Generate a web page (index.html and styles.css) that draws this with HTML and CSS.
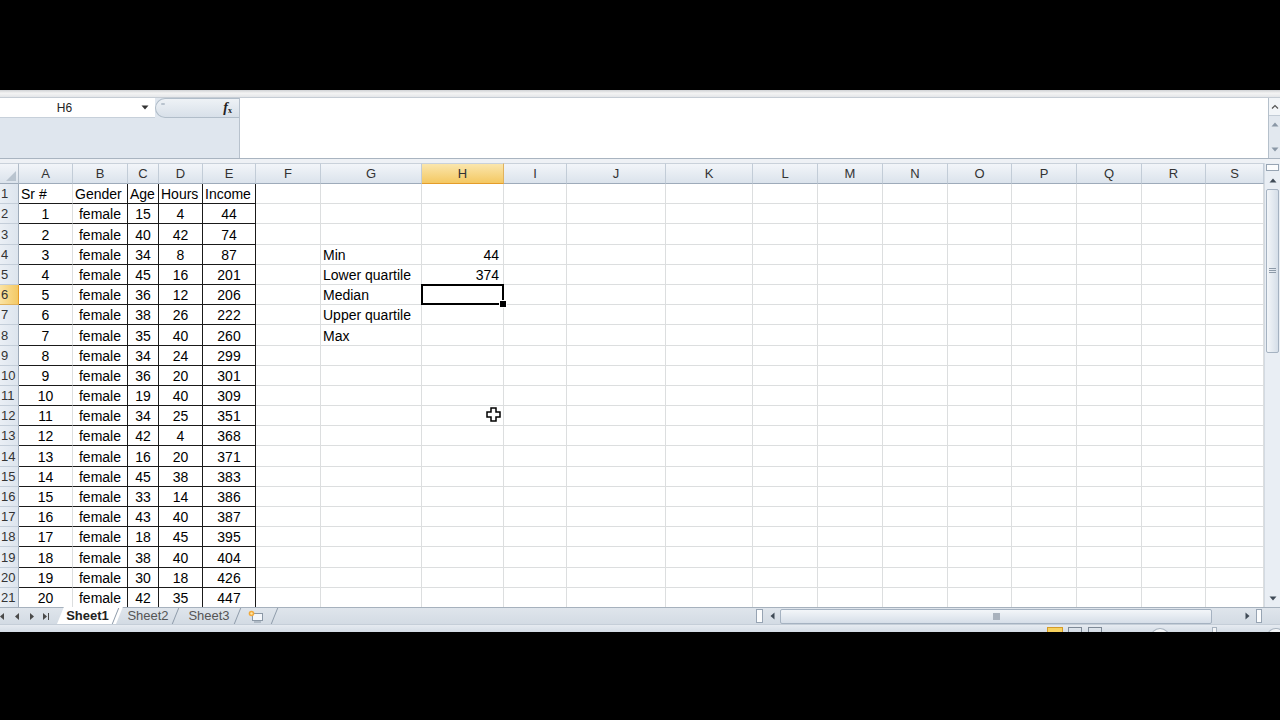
FILE: index.html
```html
<!DOCTYPE html>
<html>
<head>
<meta charset="utf-8">
<title>Excel - Sheet1</title>
<link rel="stylesheet" href="styles.css">
</head>
<body>
<div class="screen">
  <div class="topblack"></div>
  <div class="edge"></div>
  <div class="fbar">
    <div class="fleft">
      <div class="frow">
        <div class="namebox">
          <span class="nm">H6</span>
          <svg class="dd" width="8" height="5" viewBox="0 0 8 5"><path d="M0.5 0.5H7.5L4 4.5Z" fill="#333"/></svg>
        </div>
        <div class="fxzone">
          <span class="grip"></span>
          <span class="fx"><i>f</i><sub>x</sub></span>
        </div>
      </div>
    </div>
    <div class="finput"></div>
    <div class="fscroll">
      <div class="fcollapse"><svg width="8" height="5" viewBox="0 0 8 5"><path d="M1 4.5L4 1.5L7 4.5" fill="none" stroke="#555" stroke-width="1.2"/></svg></div>
      <div class="fbtns">
        <svg width="8" height="5" viewBox="0 0 8 5"><path d="M0.5 4.5H7.5L4 0.5Z" fill="#8a97a6"/></svg>
        <svg width="8" height="5" viewBox="0 0 8 5"><path d="M0.5 0.5H7.5L4 4.5Z" fill="#8a97a6"/></svg>
      </div>
    </div>
  </div>
  <div class="gap"></div>
  <div class="sheetwrap">
    <div class="gridclip">
      <table class="grid">
        <colgroup>
          <col style="width:19px"><col style="width:54px"><col style="width:55px"><col style="width:31px"><col style="width:44px"><col style="width:53px"><col style="width:65px"><col style="width:101px"><col style="width:82px"><col style="width:63px"><col style="width:99px"><col style="width:87px"><col style="width:65px"><col style="width:65px"><col style="width:65px"><col style="width:64px"><col style="width:65px"><col style="width:65px"><col style="width:64px"><col style="width:58px">
        </colgroup>
        <thead>
          <tr>
            <th class="corner"><span class="tri"></span></th>
            <th class="ch">A</th><th class="ch">B</th><th class="ch">C</th><th class="ch">D</th><th class="ch">E</th><th class="ch">F</th><th class="ch">G</th><th class="ch csel">H</th><th class="ch">I</th><th class="ch">J</th><th class="ch">K</th><th class="ch">L</th><th class="ch">M</th><th class="ch">N</th><th class="ch">O</th><th class="ch">P</th><th class="ch">Q</th><th class="ch">R</th><th class="ch">S</th>
          </tr>
        </thead>
        <tbody>
          <tr><th class="rh">1</th><td class="t hd">Sr #</td><td class="t tb hd">Gender</td><td class="t tb hd">Age</td><td class="t tb hd">Hours</td><td class="t tb hd">Income</td><td></td><td></td><td></td><td></td><td></td><td></td><td></td><td></td><td></td><td></td><td></td><td></td><td></td><td></td></tr>
          <tr><th class="rh">2</th><td class="t">1</td><td class="t tb">female</td><td class="t tb">15</td><td class="t tb">4</td><td class="t tb">44</td><td></td><td></td><td></td><td></td><td></td><td></td><td></td><td></td><td></td><td></td><td></td><td></td><td></td><td></td></tr>
          <tr><th class="rh">3</th><td class="t">2</td><td class="t tb">female</td><td class="t tb">40</td><td class="t tb">42</td><td class="t tb">74</td><td></td><td></td><td></td><td></td><td></td><td></td><td></td><td></td><td></td><td></td><td></td><td></td><td></td><td></td></tr>
          <tr><th class="rh">4</th><td class="t">3</td><td class="t tb">female</td><td class="t tb">34</td><td class="t tb">8</td><td class="t tb">87</td><td></td><td class="lbl">Min</td><td class="num">44</td><td></td><td></td><td></td><td></td><td></td><td></td><td></td><td></td><td></td><td></td><td></td></tr>
          <tr><th class="rh">5</th><td class="t">4</td><td class="t tb">female</td><td class="t tb">45</td><td class="t tb">16</td><td class="t tb">201</td><td></td><td class="lbl">Lower quartile</td><td class="num">374</td><td></td><td></td><td></td><td></td><td></td><td></td><td></td><td></td><td></td><td></td><td></td></tr>
          <tr><th class="rh rsel">6</th><td class="t">5</td><td class="t tb">female</td><td class="t tb">36</td><td class="t tb">12</td><td class="t tb">206</td><td></td><td class="lbl">Median</td><td class="sel"></td><td></td><td></td><td></td><td></td><td></td><td></td><td></td><td></td><td></td><td></td><td></td></tr>
          <tr><th class="rh">7</th><td class="t">6</td><td class="t tb">female</td><td class="t tb">38</td><td class="t tb">26</td><td class="t tb">222</td><td></td><td class="lbl">Upper quartile</td><td></td><td></td><td></td><td></td><td></td><td></td><td></td><td></td><td></td><td></td><td></td><td></td></tr>
          <tr><th class="rh">8</th><td class="t">7</td><td class="t tb">female</td><td class="t tb">35</td><td class="t tb">40</td><td class="t tb">260</td><td></td><td class="lbl">Max</td><td></td><td></td><td></td><td></td><td></td><td></td><td></td><td></td><td></td><td></td><td></td><td></td></tr>
          <tr><th class="rh">9</th><td class="t">8</td><td class="t tb">female</td><td class="t tb">34</td><td class="t tb">24</td><td class="t tb">299</td><td></td><td></td><td></td><td></td><td></td><td></td><td></td><td></td><td></td><td></td><td></td><td></td><td></td><td></td></tr>
          <tr><th class="rh">10</th><td class="t">9</td><td class="t tb">female</td><td class="t tb">36</td><td class="t tb">20</td><td class="t tb">301</td><td></td><td></td><td></td><td></td><td></td><td></td><td></td><td></td><td></td><td></td><td></td><td></td><td></td><td></td></tr>
          <tr><th class="rh">11</th><td class="t">10</td><td class="t tb">female</td><td class="t tb">19</td><td class="t tb">40</td><td class="t tb">309</td><td></td><td></td><td></td><td></td><td></td><td></td><td></td><td></td><td></td><td></td><td></td><td></td><td></td><td></td></tr>
          <tr><th class="rh">12</th><td class="t">11</td><td class="t tb">female</td><td class="t tb">34</td><td class="t tb">25</td><td class="t tb">351</td><td></td><td></td><td></td><td></td><td></td><td></td><td></td><td></td><td></td><td></td><td></td><td></td><td></td><td></td></tr>
          <tr><th class="rh">13</th><td class="t">12</td><td class="t tb">female</td><td class="t tb">42</td><td class="t tb">4</td><td class="t tb">368</td><td></td><td></td><td></td><td></td><td></td><td></td><td></td><td></td><td></td><td></td><td></td><td></td><td></td><td></td></tr>
          <tr><th class="rh">14</th><td class="t">13</td><td class="t tb">female</td><td class="t tb">16</td><td class="t tb">20</td><td class="t tb">371</td><td></td><td></td><td></td><td></td><td></td><td></td><td></td><td></td><td></td><td></td><td></td><td></td><td></td><td></td></tr>
          <tr><th class="rh">15</th><td class="t">14</td><td class="t tb">female</td><td class="t tb">45</td><td class="t tb">38</td><td class="t tb">383</td><td></td><td></td><td></td><td></td><td></td><td></td><td></td><td></td><td></td><td></td><td></td><td></td><td></td><td></td></tr>
          <tr><th class="rh">16</th><td class="t">15</td><td class="t tb">female</td><td class="t tb">33</td><td class="t tb">14</td><td class="t tb">386</td><td></td><td></td><td></td><td></td><td></td><td></td><td></td><td></td><td></td><td></td><td></td><td></td><td></td><td></td></tr>
          <tr><th class="rh">17</th><td class="t">16</td><td class="t tb">female</td><td class="t tb">43</td><td class="t tb">40</td><td class="t tb">387</td><td></td><td></td><td></td><td></td><td></td><td></td><td></td><td></td><td></td><td></td><td></td><td></td><td></td><td></td></tr>
          <tr><th class="rh">18</th><td class="t">17</td><td class="t tb">female</td><td class="t tb">18</td><td class="t tb">45</td><td class="t tb">395</td><td></td><td></td><td></td><td></td><td></td><td></td><td></td><td></td><td></td><td></td><td></td><td></td><td></td><td></td></tr>
          <tr><th class="rh">19</th><td class="t">18</td><td class="t tb">female</td><td class="t tb">38</td><td class="t tb">40</td><td class="t tb">404</td><td></td><td></td><td></td><td></td><td></td><td></td><td></td><td></td><td></td><td></td><td></td><td></td><td></td><td></td></tr>
          <tr><th class="rh">20</th><td class="t">19</td><td class="t tb">female</td><td class="t tb">30</td><td class="t tb">18</td><td class="t tb">426</td><td></td><td></td><td></td><td></td><td></td><td></td><td></td><td></td><td></td><td></td><td></td><td></td><td></td><td></td></tr>
          <tr><th class="rh">21</th><td class="t">20</td><td class="t tb">female</td><td class="t tb">42</td><td class="t tb">35</td><td class="t tb">447</td><td></td><td></td><td></td><td></td><td></td><td></td><td></td><td></td><td></td><td></td><td></td><td></td><td></td><td></td></tr>
        </tbody>
      </table>
    </div>
    <div class="vscroll">
      <div class="vsplit"></div>
      <div class="vbtn"><svg width="8" height="5" viewBox="0 0 8 5"><path d="M0.5 4.5H7.5L4 0.5Z" fill="#3f4a56"/></svg></div>
      <div class="vthumb"><svg width="7" height="6" viewBox="0 0 7 6"><path d="M0 0.5H7M0 2.5H7M0 4.5H7" stroke="#8d9aa8" stroke-width="1"/></svg></div>
      <div class="vtrack"></div>
      <div class="vbtn"><svg width="8" height="5" viewBox="0 0 8 5"><path d="M0.5 0.5H7.5L4 4.5Z" fill="#3f4a56"/></svg></div>
    </div>
  </div>
  <div class="tabbar">
    <div class="nav">
      <svg width="55" height="17" viewBox="0 0 55 17">
        <path d="M0 8.5L4 5V12Z" fill="#4a4a4a"/>
        <path d="M15 8.5L19 5V12Z" fill="#4a4a4a"/>
        <path d="M34 8.5L30 5V12Z" fill="#4a4a4a"/>
        <path d="M47 8.5L43 5V12Z" fill="#4a4a4a"/>
        <path d="M48.5 5V12" stroke="#4a4a4a" stroke-width="1"/>
      </svg>
    </div>
    <div class="tab active"><span>Sheet1</span></div>
    <div class="tab"><span>Sheet2</span></div>
    <div class="tab"><span>Sheet3</span></div>
    <div class="tab newtab">
      <svg width="16" height="13" viewBox="0 0 16 13">
        <rect x="4.5" y="3.5" width="10" height="7" fill="#f4f7fb" stroke="#8b98a6"/>
        <path d="M6 12H13" stroke="#8b98a6"/>
        <circle cx="3.5" cy="3.5" r="2.8" fill="#f2a93b"/>
        <circle cx="3.5" cy="3.5" r="1.2" fill="#fde7a8"/>
      </svg>
    </div>
    <div class="tabfill"></div>
    <div class="hscroll">
      <div class="hsplit"></div>
      <div class="hbtn"><svg width="5" height="8" viewBox="0 0 5 8"><path d="M4.5 0.5V7.5L0.5 4Z" fill="#3f4a56"/></svg></div>
      <div class="hthumb"><span class="hgrip"></span></div>
      <div class="htrack"></div>
      <div class="hbtn"><svg width="5" height="8" viewBox="0 0 5 8"><path d="M0.5 0.5V7.5L4.5 4Z" fill="#3f4a56"/></svg></div>
      <div class="hsplit2"></div>
    </div>
    <div class="corner2"></div>
  </div>
  <div class="status">
    <span class="st st-yellow"></span>
    <span class="st st-g1"></span>
    <span class="st st-g2"></span>
    <span class="st st-c1"></span>
    <span class="st st-r"></span>
    <span class="st st-c2"></span>
  </div>
  <div class="bottomblack"></div>
  <svg class="cursor" width="15" height="15" viewBox="0 0 15 15">
    <path d="M5 1H10V5H14V10H10V14H5V10H1V5H5Z" fill="#fff" stroke="#000" stroke-width="1.5" stroke-linejoin="miter"/>
  </svg>
</div>
</body>
</html>
```

FILE: styles.css
```css
* { box-sizing: border-box; }
html, body { margin: 0; padding: 0; background: #000; }
body {
  width: 1280px;
  height: 720px;
  overflow: hidden;
  font-family: "Liberation Sans", Arial, sans-serif;
}
.screen {
  position: relative;
  width: 1280px;
  height: 720px;
  background: #000;
  display: flex;
  flex-direction: column;
}
.topblack { height: 90px; flex: none; }
.edge {
  height: 8px;
  flex: none;
  background: linear-gradient(#cfd1d4, #f4f4f4 45%, #e4e6e9);
  border-bottom: 1px solid #c5ccd4;
}

/* formula bar */
.fbar {
  height: 61px;
  flex: none;
  display: flex;
  background: #fff;
  border-bottom: 1px solid #a9b4c0;
}
.fleft {
  width: 240px;
  background: #dfe6ee;
  border-right: 1px solid #b8c2cd;
}
.frow { height: 20px; display: flex; }
.namebox {
  width: 155px;
  background: #fff;
  display: flex;
  align-items: center;
  border-bottom: 1px solid #c7d0da;
}
.nm {
  width: 141px;
  text-align: center;
  font-size: 12px;
  color: #222;
  padding-right: 12px;
}
.fxzone {
  flex: 1;
  display: flex;
  align-items: center;
  justify-content: space-between;
  background: linear-gradient(#eef2f6, #d8e0e9);
  border: 1px solid #b1bdc9;
  border-right: none;
  border-radius: 10px 0 0 10px;
  padding: 0 7px 0 5px;
}
.grip {
  width: 4px;
  height: 2px;
  margin-top: -8px;
  background: #b9c3ce;
  border-radius: 1px;
}
.fx {
  font-family: "Liberation Serif", "Times New Roman", serif;
  font-weight: bold;
  font-size: 14px;
  color: #222;
  line-height: 1;
}
.fx sub { font-size: 8px; vertical-align: -1px; }
.finput { flex: 1; background: #fff; }
.fscroll {
  width: 12px;
  background: #e2e8ef;
  border-left: 1px solid #b5c0cb;
  display: flex;
  flex-direction: column;
}
.fcollapse {
  height: 18px;
  display: flex;
  align-items: center;
  justify-content: center;
  border-bottom: 1px solid #c3ccd6;
  background: #f2f5f8;
}
.fbtns {
  flex: 1;
  display: flex;
  flex-direction: column;
  align-items: center;
  justify-content: space-between;
  padding: 6px 0 6px;
}
.gap {
  height: 4px;
  flex: none;
  background: #eef1f5;
}

/* sheet */
.sheetwrap {
  height: 444px;
  flex: none;
  display: flex;
  background: #fff;
}
.gridclip {
  width: 1264px;
  overflow: hidden;
}
.grid {
  border-spacing: 0;
  table-layout: fixed;
  width: 1264px;
}
.grid th, .grid td {
  padding: 0;
  white-space: nowrap;
  overflow: hidden;
}
.ch {
  height: 21px;
  font-weight: normal;
  font-size: 13px;
  color: #333;
  text-align: center;
  background: linear-gradient(#f2f5f9, #dbe3ec);
  border-right: 1px solid #c2ccd7;
  border-bottom: 1px solid #9eabba;
  border-top: 1px solid #c9d1da;
}
.ch.csel {
  background: linear-gradient(#fae6ad, #f4c862);
  border-bottom: 1px solid #e49c2a;
  border-right: 1px solid #e0b25e;
  color: #333;
}
.corner {
  position: relative;
  background: linear-gradient(#f2f5f9, #dbe3ec);
  border-right: 1px solid #b2bdc9;
  border-bottom: 1px solid #9eabba;
  border-top: 1px solid #c9d1da;
}
.tri {
  position: absolute;
  right: 2px;
  bottom: 2px;
  width: 0;
  height: 0;
  border-left: 10px solid transparent;
  border-bottom: 10px solid #b9c4cf;
}
.rh {
  height: 20.2px;
  font-weight: normal;
  font-size: 13px;
  color: #333;
  text-align: left;
  vertical-align: bottom;
  line-height: 18px;
  padding-left: 1px !important;
  background: linear-gradient(90deg, #eaeff5, #dde5ee);
  border-right: 1px solid #9eabba;
  border-bottom: 1px solid #c4ced9;
}
.rh.rsel {
  background: linear-gradient(90deg, #fae3a4, #f4c964);
  border-bottom: 1px solid #e0b25e;
  border-right: 1px solid #e49c2a;
}
.grid td {
  height: 20.2px;
  font-size: 14px;
  color: #000;
  border-right: 1px solid #dcdedf;
  border-bottom: 1px solid #dcdedf;
  line-height: 18px;
  vertical-align: bottom;
}
.grid td.t {
  text-align: center;
  border-bottom: 1px solid #1a1a1a;
}
.grid td.tb { border-right: 1px solid #1a1a1a; }
.grid td.hd { text-align: left; padding-left: 2px; }
.grid td.lbl { text-align: left; padding-left: 2px; overflow: visible; }
.grid td.num { text-align: right; padding-right: 4px; }
.grid td.sel { position: relative; overflow: visible; }
.grid td.sel::before {
  content: "";
  position: absolute;
  left: -1px;
  top: -1px;
  right: -1px;
  bottom: -1px;
  border: 2px solid #000;
}
.grid td.sel::after {
  content: "";
  position: absolute;
  right: -4px;
  bottom: -4px;
  width: 6px;
  height: 6px;
  background: #000;
  border: 1px solid #fff;
}

/* vertical scroll */
.vscroll {
  width: 16px;
  display: flex;
  flex-direction: column;
  background: #e9eef4;
  border-left: 1px solid #d3dae2;
}
.vsplit {
  height: 7px;
  margin: 1px 1px 0 1px;
  border: 1px solid #97a4b3;
  background: #fbfcfd;
}
.vbtn {
  height: 18px;
  display: flex;
  align-items: center;
  justify-content: center;
}
.vthumb {
  height: 164px;
  margin: 0 1px;
  border: 1px solid #a5b2c1;
  border-radius: 2px;
  background: linear-gradient(90deg, #f3f6f9, #d5dee8);
  display: flex;
  align-items: center;
  justify-content: center;
}
.vtrack { flex: 1; }

/* tab bar */
.tabbar {
  height: 17px;
  flex: none;
  display: flex;
  background: linear-gradient(#dfe5ec, #d3dbe4);
  border-top: 1px solid #a6b1bd;
  font-size: 13px;
}
.nav { width: 57px; display: flex; align-items: center; }
.tab {
  position: relative;
  width: 61px;
  display: flex;
  align-items: center;
  justify-content: center;
  color: #555;
}
.tab span { position: relative; z-index: 1; margin-top: -1px; }
.tab::after {
  content: "";
  position: absolute;
  right: 2px;
  top: 0;
  bottom: 0;
  width: 1px;
  background: #8e9baa;
  transform: skewX(-22deg);
}
.tab.active {
  color: #222;
  font-weight: bold;
}
.tab.active::before {
  content: "";
  position: absolute;
  left: 0;
  right: 2px;
  top: -1px;
  bottom: 0;
  background: #fff;
  transform: skewX(-22deg);
  transform-origin: bottom left;
}
.tab:nth-of-type(3) { width: 60px; }
.tab:nth-of-type(4) { width: 62px; }
.tab.newtab { width: 37px; justify-content: flex-start; padding-left: 8px; }
.tabfill { flex: 1; }
.hscroll {
  width: 509px;
  display: flex;
  align-items: center;
}
.hsplit {
  width: 7px;
  height: 14px;
  margin: 0 1px;
  border: 1px solid #97a4b3;
  background: #fbfcfd;
}
.hbtn {
  width: 16px;
  height: 15px;
  display: flex;
  align-items: center;
  justify-content: center;
}
.hthumb {
  width: 432px;
  height: 15px;
  border: 1px solid #a5b2c1;
  border-radius: 2px;
  background: linear-gradient(#f3f6f9, #d6dee8);
  display: flex;
  align-items: center;
  justify-content: center;
}
.hgrip {
  width: 7px;
  height: 7px;
  margin-left: 1px;
  background: #a9b2bd;
}
.htrack { flex: 1; }
.hsplit2 {
  width: 6px;
  height: 14px;
  margin: 0 2px 0 1px;
  border: 1px solid #97a4b3;
  background: #fbfcfd;
}
.corner2 { width: 16px; }

/* status bar top edge */
.status {
  position: relative;
  height: 8px;
  flex: none;
  background: linear-gradient(#e6ebf1, #d4dce5);
  border-top: 1px solid #c5ced8;
}
.st { position: absolute; top: 2px; display: block; }
.st-yellow { left: 1047px; width: 16px; height: 6px; background: #f6d15e; border: 1px solid #d49b2a; border-bottom: none; }
.st-g1 { left: 1068px; width: 14px; height: 6px; border: 1px solid #7d8996; border-bottom: none; }
.st-g2 { left: 1088px; width: 14px; height: 6px; border: 1px solid #7d8996; border-bottom: none; }
.st-c1 { left: 1150px; top: 3px; width: 20px; height: 10px; border-radius: 10px 10px 0 0; background: #f4f6f8; border: 1px solid #a8b3bf; }
.st-r { left: 1212px; width: 5px; height: 6px; background: #f4f6f8; border: 1px solid #a8b3bf; }
.st-c2 { left: 1266px; top: 3px; width: 20px; height: 10px; border-radius: 10px 10px 0 0; background: #f4f6f8; border: 1px solid #a8b3bf; }
.bottomblack { flex: 1; background: #000; position: relative; z-index: 1; }

.cursor {
  position: absolute;
  left: 486px;
  top: 407px;
}
```
